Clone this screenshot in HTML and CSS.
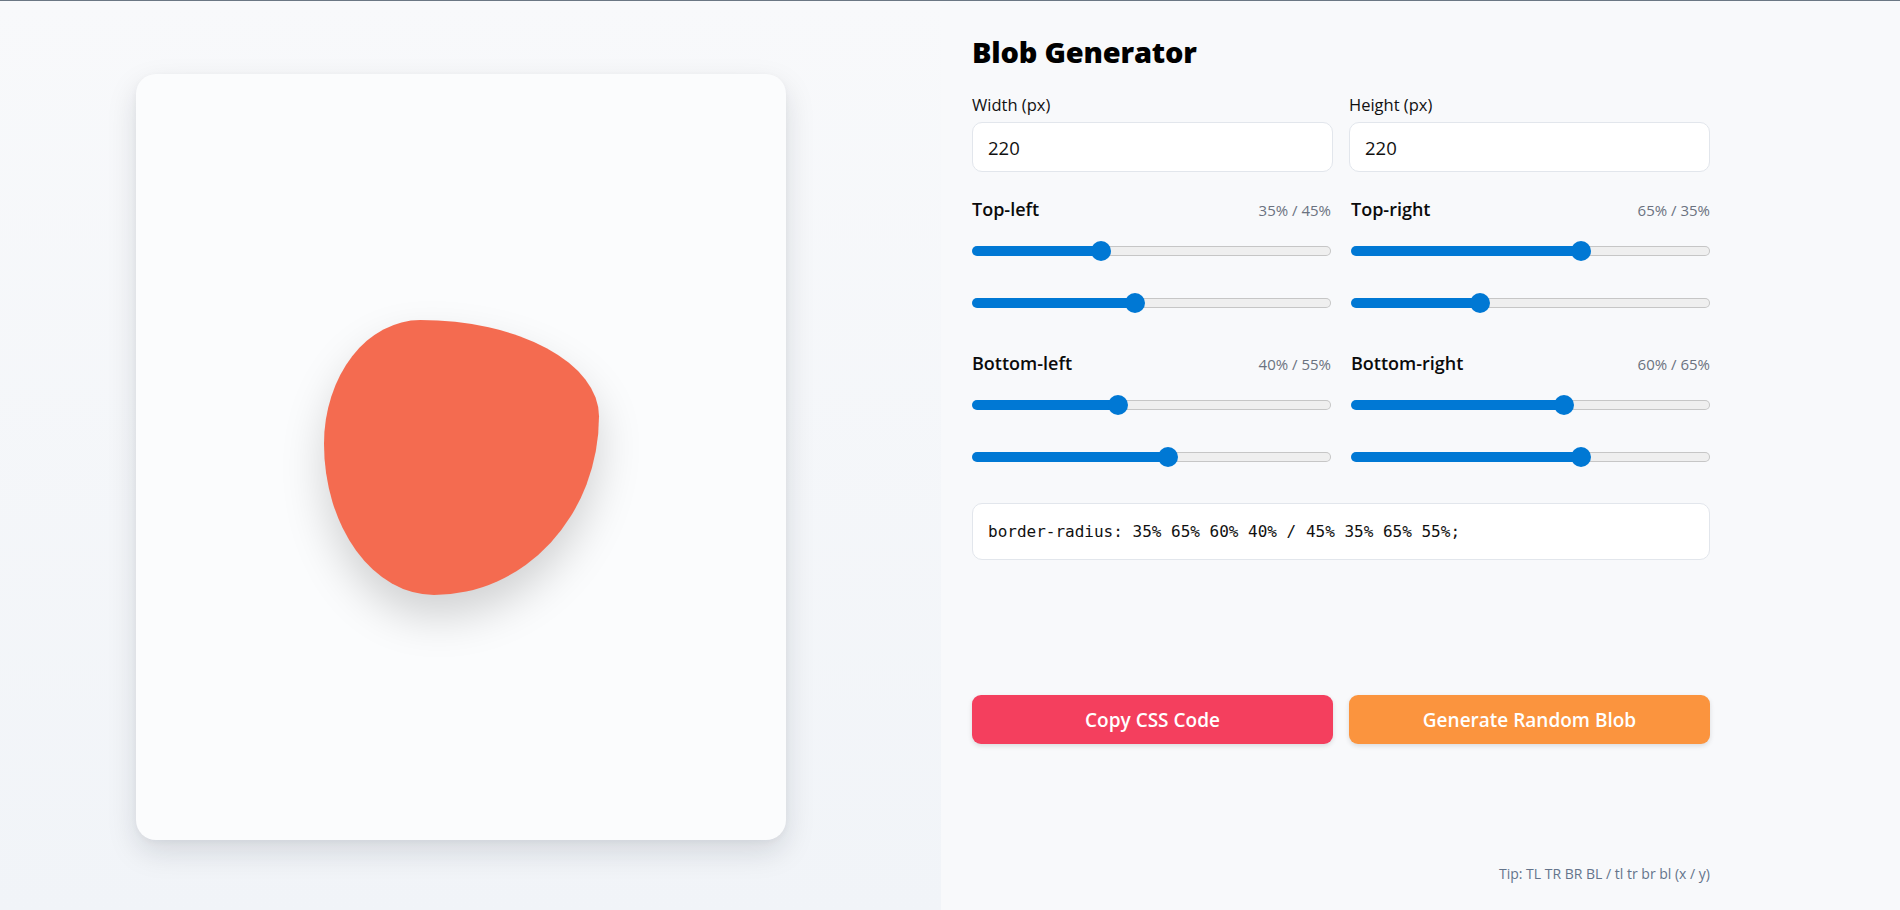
FILE: index.html
```html
<!DOCTYPE html>
<html lang="en">
<head>
<meta charset="utf-8">
<title>Blob Generator</title>
<link rel="stylesheet" href="styles.css">
</head>
<body>
<div class="app">
  <section class="stage">
    <div class="card">
      <div class="blob"></div>
    </div>
  </section>
  <section class="panel">
    <h1 class="title">Blob Generator</h1>
    <div class="pair-grid">
      <label class="field">
        <span class="field-label">Width (px)</span>
        <input class="text-input" type="text" value="220">
      </label>
      <label class="field">
        <span class="field-label">Height (px)</span>
        <input class="text-input" type="text" value="220">
      </label>
    </div>
    <div class="corner-grid">
      <div class="corner">
        <div class="corner-head"><span class="corner-name">Top-left</span><span class="corner-val">35% / 45%</span></div>
        <input class="range" type="range" min="0" max="100" value="35" style="--v:0.35">
        <input class="range" type="range" min="0" max="100" value="45" style="--v:0.45">
      </div>
      <div class="corner">
        <div class="corner-head"><span class="corner-name">Top-right</span><span class="corner-val">65% / 35%</span></div>
        <input class="range" type="range" min="0" max="100" value="65" style="--v:0.65">
        <input class="range" type="range" min="0" max="100" value="35" style="--v:0.35">
      </div>
      <div class="corner">
        <div class="corner-head"><span class="corner-name">Bottom-left</span><span class="corner-val">40% / 55%</span></div>
        <input class="range" type="range" min="0" max="100" value="40" style="--v:0.40">
        <input class="range" type="range" min="0" max="100" value="55" style="--v:0.55">
      </div>
      <div class="corner">
        <div class="corner-head"><span class="corner-name">Bottom-right</span><span class="corner-val">60% / 65%</span></div>
        <input class="range" type="range" min="0" max="100" value="60" style="--v:0.60">
        <input class="range" type="range" min="0" max="100" value="65" style="--v:0.65">
      </div>
    </div>
    <div class="code">border-radius: 35% 65% 60% 40% / 45% 35% 65% 55%;</div>
    <div class="actions">
      <button class="btn btn-copy" type="button">Copy CSS Code</button>
      <button class="btn btn-random" type="button">Generate Random Blob</button>
    </div>
    <p class="tip">Tip: TL TR BR BL / tl tr br bl (x / y)</p>
  </section>
</div>
</body>
</html>
```

FILE: styles.css
```css
* { box-sizing: border-box; }

html, body {
  margin: 0;
  height: 100%;
}

body {
  font-family: "Open Sans", "Noto Sans", sans-serif;
  color: #0b0b0b;
  background: #f8f9fb;
  border-top: 1px solid #6b7784;
  overflow: hidden;
}

.app {
  display: flex;
  height: 909px;
}

.stage {
  flex: none;
  width: 941px;
  padding: 73px 155px 70px 136px;
  background: linear-gradient(180deg, #f8f9fb 0%, #f1f4f8 100%);
}

.card {
  width: 650px;
  height: 766px;
  border-radius: 20px;
  background: #fbfcfd;
  box-shadow: 0 12px 30px rgba(15, 23, 42, 0.13), 0 2px 6px rgba(15, 23, 42, 0.04);
  display: flex;
  align-items: center;
  justify-content: center;
}

.blob {
  width: 275px;
  height: 275px;
  background: #f46b50;
  border-radius: 35% 65% 60% 40% / 45% 35% 65% 55%;
  box-shadow: 0 22px 44px rgba(0, 0, 0, 0.17);
}

.panel {
  flex: 1;
  padding: 34px 190px 0 31px;
  background: #f8f9fb;
}

.title {
  margin: 0 0 26px;
  font-size: 29px;
  line-height: 34px;
  font-weight: 800;
  color: #000;
  letter-spacing: -0.2px;
}

.pair-grid {
  display: grid;
  grid-template-columns: 1fr 1fr;
  gap: 16px;
}

.field {
  display: flex;
  flex-direction: column;
  gap: 7px;
}

.field-label {
  font-size: 16.5px;
  line-height: 20px;
  font-weight: 500;
  color: #111;
}

.text-input {
  height: 50px;
  border: 1px solid #e2e6ec;
  border-radius: 10px;
  background: #fff;
  padding: 0 15px;
  font-family: inherit;
  font-size: 18.5px;
  color: #111;
  outline: none;
}

.corner-grid {
  display: grid;
  grid-template-columns: 1fr 1fr;
  column-gap: 20px;
  row-gap: 38px;
  margin-top: 25px;
}

.corner {
  display: flex;
  flex-direction: column;
}

.corner-head {
  display: flex;
  justify-content: space-between;
  align-items: baseline;
  height: 24px;
  margin-bottom: 20px;
}

.corner-name {
  font-size: 18px;
  line-height: 24px;
  font-weight: 600;
  color: #0b0b0b;
}

.corner-val {
  font-size: 15px;
  line-height: 24px;
  color: #6b7280;
}

.range {
  -webkit-appearance: none;
  appearance: none;
  display: block;
  width: 100%;
  height: 20px;
  margin: 0;
  background: transparent;
}

.range + .range {
  margin-top: 32px;
}

.range::-webkit-slider-runnable-track {
  height: 10px;
  border-radius: 5px;
  border: 1px solid transparent;
  background:
    linear-gradient(to right, #0078d4 calc(10px + (100% - 20px) * var(--v)), transparent 0) border-box,
    linear-gradient(#efefef, #efefef) padding-box,
    linear-gradient(#c6c6c6, #c6c6c6) border-box;
}

.range::-webkit-slider-thumb {
  -webkit-appearance: none;
  appearance: none;
  width: 20px;
  height: 20px;
  margin-top: -6px;
  border: none;
  border-radius: 50%;
  background: #0078d4;
}

.code {
  margin-top: 36px;
  height: 57px;
  display: flex;
  align-items: center;
  padding: 0 15px;
  background: #fff;
  border: 1px solid #e2e6ec;
  border-radius: 10px;
  font-family: "DejaVu Sans Mono", "Liberation Mono", monospace;
  font-size: 16px;
  color: #111;
  white-space: nowrap;
}

.actions {
  display: grid;
  grid-template-columns: 1fr 1fr;
  gap: 16px;
  margin-top: 135px;
}

.btn {
  height: 49px;
  border: none;
  border-radius: 9px;
  font-family: inherit;
  font-size: 19px;
  font-weight: 600;
  color: #fff;
  cursor: pointer;
  box-shadow: 0 2px 5px rgba(0, 0, 0, 0.12);
}

.btn-copy { background: #f43f5e; }
.btn-random { background: #fb943e; }

.tip {
  margin: 120px 0 0;
  text-align: right;
  font-size: 14px;
  line-height: 20px;
  color: #64748b;
}
```
